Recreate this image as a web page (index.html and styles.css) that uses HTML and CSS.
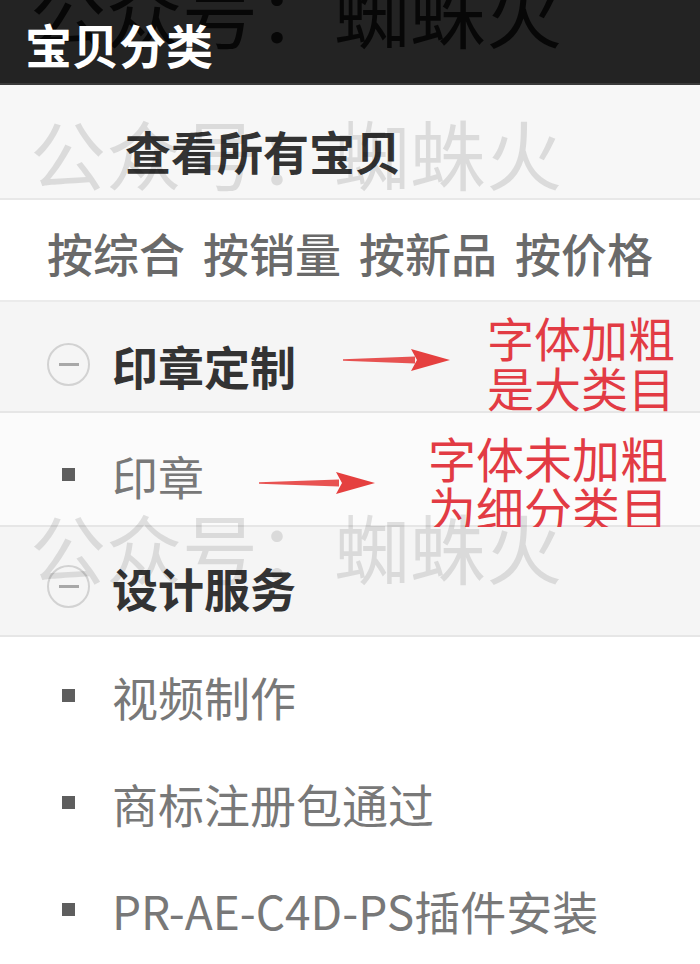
FILE: index.html
```html
<!DOCTYPE html>
<html lang="zh-CN">
<head>
<meta charset="utf-8">
<title>宝贝分类</title>
<link rel="stylesheet" href="styles.css">
</head>
<body>
<div class="page">
  <header class="bar"><span class="bar-title">宝贝分类</span></header>
  <div class="row row-all">查看所有宝贝</div>
  <div class="row row-sort">
    <span>按综合</span><span>按销量</span><span>按新品</span><span>按价格</span>
  </div>
  <div class="row row-cat row-cat1">
    <span class="mark"><span class="toggle"></span></span>
    <span class="cat-name">印章定制</span>
    <div class="note note-1">
      <svg class="arrow arrow-1" viewBox="0 0 107 24" width="107" height="24"><polygon points="0,11.2 72,8.5 72,15.5 0,12.8" fill="#e5403f" opacity="0.9"/><polygon points="68,1 107,12 68,23 74,12" fill="#e5403f"/></svg>
      <div class="note-text note-text-1">字体加粗<br>是大类目</div>
    </div>
  </div>
  <div class="row row-sub row-sub1">
    <span class="mark"><span class="bullet"></span></span>
    <span class="sub-name">印章</span>
    <div class="note note-2">
      <svg class="arrow arrow-2" viewBox="0 0 116 24" width="116" height="24"><polygon points="0,11.2 80,8.5 80,15.5 0,12.8" fill="#e5403f" opacity="0.9"/><polygon points="77,1 116,12 77,23 83,12" fill="#e5403f"/></svg>
      <div class="note-text note-text-2">字体未加粗<br>为细分类目</div>
    </div>
  </div>
  <div class="row row-cat row-cat2">
    <span class="mark"><span class="toggle"></span></span>
    <span class="cat-name">设计服务</span>
  </div>
  <div class="row row-item">
    <span class="mark"><span class="bullet"></span></span>
    <span class="sub-name">视频制作</span>
  </div>
  <div class="row row-item">
    <span class="mark"><span class="bullet"></span></span>
    <span class="sub-name">商标注册包通过</span>
  </div>
  <div class="row row-item">
    <span class="mark"><span class="bullet"></span></span>
    <span class="sub-name">PR-AE-C4D-PS插件安装</span>
  </div>

  <div class="wm wm-dark wm-1">公众号：蜘蛛火</div>
  <div class="wm wm-light wm-2">公众号：蜘蛛火</div>
  <div class="wm wm-light wm-3">公众号：蜘蛛火</div>
</div>
</body>
</html>
```

FILE: styles.css
```css
html, body {
  margin: 0;
  padding: 0;
  background: #ffffff;
}

.page {
  position: relative;
  width: 700px;
  height: 964px;
  overflow: hidden;
  font-family: "Noto Sans CJK SC", "Noto Sans", sans-serif;
  background: #ffffff;
}

.bar {
  box-sizing: border-box;
  height: 85px;
  padding: 3px 0 0 25px;
  display: flex;
  align-items: center;
  background: #232323;
  border-bottom: 2px solid #3a3a3a;
  color: #ffffff;
  font-size: 47px;
  font-weight: 700;
  line-height: 1;
}

.bar-title {
  position: relative;
  z-index: 3;
}

.row {
  position: relative;
  box-sizing: border-box;
  display: flex;
  align-items: center;
  line-height: 1;
  font-size: 46px;
}

.row-all {
  height: 115px;
  padding: 16px 0 0 125px;
  background: #f7f7f7;
  border-bottom: 2px solid #e8e8e8;
  color: #333333;
  font-weight: 700;
}

.row-sort {
  height: 102px;
  padding: 3px 0 0 47px;
  gap: 18px;
  background: #ffffff;
  border-bottom: 2px solid #ebebeb;
  color: #6a6a6a;
  font-weight: 500;
}

.row-cat {
  padding-left: 47px;
  background: #f5f5f5;
  border-bottom: 2px solid #e6e6e6;
}

.row-cat1 {
  height: 111px;
  padding-top: 16px;
}

.row-cat2 {
  height: 110px;
  padding-top: 11px;
}

.row-sub1 {
  height: 114px;
  padding: 11px 0 0 47px;
  background: #fbfbfb;
  border-bottom: 2px solid #e6e6e6;
}

.row-item {
  height: 107px;
  padding: 10px 0 0 47px;
  background: #ffffff;
}

.mark {
  width: 43px;
  height: 43px;
  margin-right: 22px;
  display: flex;
  align-items: center;
  justify-content: center;
  flex: none;
}

.toggle {
  box-sizing: border-box;
  width: 43px;
  height: 43px;
  border: 2px solid #d2d2d2;
  border-radius: 50%;
  display: flex;
  align-items: center;
  justify-content: center;
}

.toggle::before {
  content: "";
  width: 20px;
  height: 3px;
  background: #a8a8a8;
}

.bullet {
  width: 13px;
  height: 13px;
  background: #5e5e5e;
}

.cat-name {
  color: #333333;
  font-weight: 700;
}

.sub-name {
  color: #787878;
  font-weight: 400;
}

.note {
  position: absolute;
  top: 0;
  left: 0;
  right: 0;
  bottom: 0;
  pointer-events: none;
}

.arrow {
  position: absolute;
  display: block;
}

.arrow-1 {
  left: 343px;
  top: 46px;
}

.arrow-2 {
  left: 259px;
  top: 58px;
}

.note-text {
  position: absolute;
  color: #e23b44;
  line-height: 50px;
  font-weight: 400;
  white-space: nowrap;
}

.note-text-1 {
  left: 487px;
  top: 10px;
  font-size: 47px;
}

.note-text-2 {
  left: 428px;
  top: 19px;
  font-size: 48px;
}

.wm {
  position: absolute;
  left: 30px;
  font-size: 76px;
  line-height: 1;
  font-weight: 400;
  white-space: nowrap;
  pointer-events: none;
  z-index: 2;
}

.wm-dark {
  color: rgba(0, 0, 0, 0.8);
}

.wm-light {
  color: rgba(0, 0, 0, 0.11);
}

.wm-1 {
  top: -28px;
}

.wm-2 {
  top: 114px;
}

.wm-3 {
  top: 508px;
}
```
